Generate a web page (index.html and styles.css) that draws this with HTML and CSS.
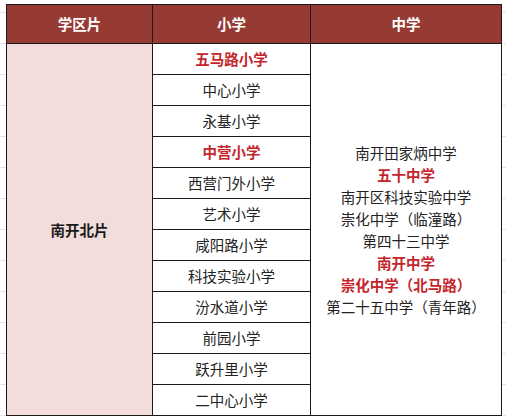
FILE: index.html
```html
<!DOCTYPE html>
<html lang="zh">
<head>
<meta charset="utf-8">
<link rel="stylesheet" href="styles.css">
</head>
<body>
<div class="sheet">
<table class="zones">
  <colgroup>
    <col class="c1"><col class="c2"><col class="c3">
  </colgroup>
  <thead>
    <tr><th>学区片</th><th>小学</th><th>中学</th></tr>
  </thead>
  <tbody>
    <tr>
      <td class="zone" rowspan="12">南开北片</td>
      <td class="hl">五马路小学</td>
      <td class="middle" rowspan="12">
        <div class="mlist">
          <span>南开田家炳中学</span>
          <span class="hl">五十中学</span>
          <span>南开区科技实验中学</span>
          <span>崇化中学（临潼路）</span>
          <span>第四十三中学</span>
          <span class="hl">南开中学</span>
          <span class="hl">崇化中学（北马路）</span>
          <span>第二十五中学（青年路）</span>
        </div>
      </td>
    </tr>
    <tr><td>中心小学</td></tr>
    <tr><td>永基小学</td></tr>
    <tr><td class="hl">中营小学</td></tr>
    <tr><td>西营门外小学</td></tr>
    <tr><td>艺术小学</td></tr>
    <tr><td>咸阳路小学</td></tr>
    <tr><td>科技实验小学</td></tr>
    <tr><td>汾水道小学</td></tr>
    <tr><td>前园小学</td></tr>
    <tr><td>跃升里小学</td></tr>
    <tr><td>二中心小学</td></tr>
  </tbody>
</table>
</div>
</body>
</html>
```
FILE: styles.css
```css
html, body {
  margin: 0;
  padding: 0;
}
body {
  width: 506px;
  height: 419px;
  overflow: hidden;
  background-color: #ffffff;
  background-image:
    linear-gradient(to bottom, transparent 0, transparent 30px, #e4e4e4 30px, #e4e4e4 31px);
  background-size: 100% 31px;
  background-position: 0 13px;
  font-family: "Noto Sans CJK SC", "Microsoft YaHei", sans-serif;
}
.sheet {
  padding: 4px 0 0 6px;
}
.zones {
  border-collapse: collapse;
  table-layout: fixed;
  width: 495px;
  background: #ffffff;
  font-size: 14.5px;
  color: #222222;
}
.c1 { width: 146px; }
.c2 { width: 158px; }
.c3 { width: 191px; }
.zones th,
.zones td {
  border: 1px solid #1a1a1a;
  padding: 0;
  text-align: center;
  vertical-align: middle;
  line-height: 20px;
}
.zones th {
  height: 38px;
  background: #963b34;
  color: #ffffff;
  font-weight: bold;
  font-size: 14.5px;
}
.zones td {
  height: 30px;
}
.zones td.zone {
  background: #f2dddc;
  font-weight: bold;
  color: #1a1a1a;
}
.hl {
  color: #c4262b;
  font-weight: bold;
}
.zones td.middle {
  background: #ffffff;
}
.mlist {
  display: flex;
  flex-direction: column;
  align-items: center;
  line-height: 22px;
}
```
